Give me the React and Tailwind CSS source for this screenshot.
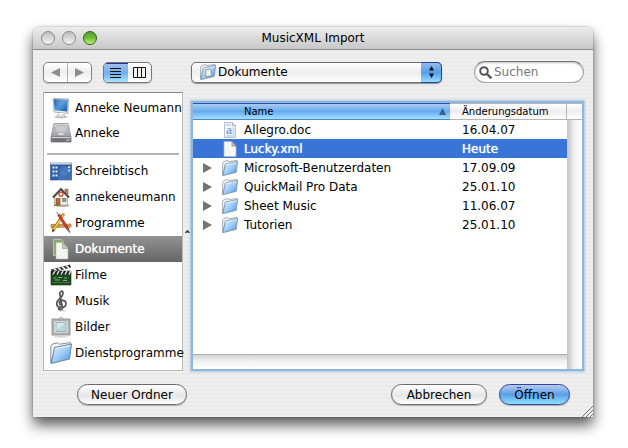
import React, { useState } from "react";

function ComputerIcon() {
  return (
    <svg viewBox="0 0 22 22" className="w-[22px] h-[22px]" aria-hidden="true">
      <defs>
        <linearGradient id="screen" x1="0" y1="0" x2="1" y2="1">
          <stop offset="0" stopColor="#1d559f" />
          <stop offset=".5" stopColor="#4f9ade" />
          <stop offset="1" stopColor="#1f569e" />
        </linearGradient>
      </defs>
      <ellipse cx="11" cy="20" rx="7" ry="1.5" fill="#c9c9c9" />
      <path d="M9 15h4l2 5H7z" fill="#e5e5e5" stroke="#a5a5a5" strokeWidth=".6" />
      <path d="M3 1.500l15.500.500-.7 14.500L4 15z" fill="#e9edf2" stroke="#9aa3b0" strokeWidth=".8" />
      <path d="M3.800 2.300l14 .5-.6 11.700L4.600 13.200z" fill="url(#screen)" />
      <path d="M4 2.500l13.500.400L8 9z" fill="#fff" opacity=".12" />
      <path d="M7.500 16l3.500 3.500L14.500 16" fill="#f8f8f8" stroke="#bbb" strokeWidth=".5" />
    </svg>
  );
}

function DiskIcon() {
  return (
    <svg viewBox="0 0 22 22" className="w-[22px] h-[22px]" aria-hidden="true">
      <defs>
        <linearGradient id="disk" x1="0" y1="0" x2="0" y2="1">
          <stop offset="0" stopColor="#d9d9dc" />
          <stop offset="1" stopColor="#9b9ba1" />
        </linearGradient>
      </defs>
      <path d="M4 1.500h14L21 15H1z" fill="url(#disk)" stroke="#85858b" strokeWidth=".7" />
      <path d="M1 15h20v5H1z" fill="#7e7e84" stroke="#67676d" strokeWidth=".7" />
      <path d="M1.500 15.500h19" stroke="#d5d5d8" />
      <ellipse cx="11" cy="7" rx="6" ry="4.2" fill="#cacace" stroke="#a4a4aa" strokeWidth=".6" />
      <path d="M6 12h10l-1-2H8z" fill="#b0b0b6" />
      <ellipse cx="11" cy="11.8" rx="3.2" ry="1.5" fill="#e7e7ea" stroke="#8f8f95" strokeWidth=".5" />
      <path d="M4 17v2.500M6 17v2.500M8 17v2.500M10 17v2.500M12 17v2.500M14 17v2.500" stroke="#5c5c61" strokeWidth=".8" />
      <circle cx="18" cy="18" r=".8" fill="#e8e8e8" />
    </svg>
  );
}

function DesktopIcon() {
  return (
    <svg viewBox="0 0 22 22" className="w-[22px] h-[22px]" aria-hidden="true">
      <rect x=".5" y="3" width="21" height="17" fill="#2f5fa5" stroke="#274d88" strokeWidth=".6" />
      <rect x=".5" y="2.500" width="21" height="2" fill="#cfd7e5" />
      <path d="M8 20c0-7 4-11 13.500-15v15z" fill="#4679bc" opacity=".7" />
      <circle cx="14" cy="11" r="5" fill="#5688c6" opacity=".5" />
      <path d="M2.500 6.500h2v2h-2zM5.500 6.500h2v2h-2zM2.500 10.500h2v2h-2zM5.500 10.500h2v2h-2zM2.500 14.500h2v2h-2zM5.500 14.500h2v2h-2zM18 6.500h2v1.500h-2zM18.500 9.500h1.500v2h-1.500z" fill="#e6edf7" />
    </svg>
  );
}

function HomeIcon() {
  return (
    <svg viewBox="0 0 22 22" className="w-[22px] h-[22px]" aria-hidden="true">
      <ellipse cx="12" cy="19.500" rx="8" ry="1.500" fill="#b8b0a5" />
      <path d="M15 3h3v5h-3z" fill="#a98d77" stroke="#6c5343" strokeWidth=".5" />
      <path d="M4.500 10L11 4l6.500 6v9h-13z" fill="#f1efe9" stroke="#9b958b" strokeWidth=".7" />
      <path d="M3 11.500L11 3l8 8.500" fill="none" stroke="#4a423c" strokeWidth="2" />
      <path d="M3.500 10L11 2l7.500 8" fill="none" stroke="#988b80" strokeWidth=".6" />
      <circle cx="11" cy="8.200" r="2" fill="#f1efe9" stroke="#c0502c" strokeWidth="1.200" />
      <rect x="6" y="12.500" width="4" height="6.500" fill="#b96930" stroke="#704020" strokeWidth=".5" />
      <rect x="12.500" y="12.500" width="3.500" height="3" fill="#89919a" stroke="#666" strokeWidth=".5" />
      <path d="M4 19.500h5" stroke="#648842" />
    </svg>
  );
}

function AppsIcon() {
  return (
    <svg viewBox="0 0 22 22" className="w-[22px] h-[22px]" aria-hidden="true">
      <path d="M1 12.500l20-.500v3l-20 .500z" fill="#d99b55" stroke="#93602b" strokeWidth=".6" />
      <path d="M13.500 2L3 18.500" stroke="#8b6b13" strokeWidth="3" />
      <path d="M13.500 2.500L3.300 18.300" stroke="#f3cb3b" strokeWidth="1.800" />
      <path d="M2 20.500l.5-3.500 2.500 1.500z" fill="#4b3a2a" />
      <path d="M8.500 2.500L18.500 18" stroke="#831d1b" strokeWidth="2.600" />
      <path d="M8.500 2.500L18.300 17.700" stroke="#dd4038" strokeWidth="1.500" />
      <path d="M17.500 17l2.500 3.500" stroke="#7b7b7b" strokeWidth="1.700" />
      <path d="M13.500 1l1.500 1.200-1 1.500-1.700-1z" fill="#e57a8c" />
      <path d="M7 0l1 2.500" stroke="#777" />
    </svg>
  );
}

function DocumentsIcon() {
  return (
    <svg viewBox="0 0 22 22" className="w-[22px] h-[22px]" aria-hidden="true">
      <path d="M3.500 1.500h8l2 3v13h-10z" fill="#86a668" stroke="#cfdcc2" strokeWidth=".7" />
      <path d="M6 4.500h7l5 5.500v11H6z" fill="#f3f5ef" stroke="#b2b9aa" strokeWidth=".6" />
      <path d="M12.500 4.500v6H18z" fill="#c2cbba" stroke="#8c9683" strokeWidth=".6" />
    </svg>
  );
}

function MoviesIcon() {
  return (
    <svg viewBox="0 0 22 22" className="w-[22px] h-[22px]" aria-hidden="true">
      <path d="M1 5.500L20 .500l1 3L2 8.500z" fill="#333" />
      <path d="M4 4.700l3 2.400M8 3.700l3 2.400M12 2.600l3 2.400M16 1.500l3 2.400" stroke="#f4f4f4" strokeWidth="1.600" />
      <path d="M1 7h20v14H1z" fill="#1e4a20" stroke="#17321a" strokeWidth=".6" />
      <path d="M1 7h20v3.500H1z" fill="#222" />
      <path d="M3 10.500l2-3.500M7 10.500L9 7M11 10.500L13 7M15 10.500L17 7M19 10.500L20.500 7" stroke="#eee" strokeWidth="1.400" />
      <path d="M3.500 14h3M8 13.500h4M14 14h3M5 16h5M13 16.500h4" stroke="#9fc79a" strokeWidth=".8" />
      <path d="M2 18.500h18" stroke="#4f8a4c" strokeWidth=".6" />
    </svg>
  );
}

function MusicIcon() {
  return (
    <svg viewBox="0 0 22 22" className="w-[22px] h-[22px]" aria-hidden="true">
      <ellipse cx="12" cy="20.800" rx="4.500" ry=".8" fill="#d2d2d2" />
      <path
        d="M12.600 18.500L9.800 4C9.600 2 11.500.800 12.300 1.200c1 .6.900 3.300-.6 5.200-1.500 1.900-5 3.700-5 7.200 0 2.300 2 3.800 4.600 3.800s4.600-1.500 4.600-3.700c0-2-1.600-3.300-3.400-3.300-1.900 0-3 1.200-3 2.600 0 1.100.8 1.900 1.800 2.100"
        fill="none"
        stroke="#555"
        strokeWidth="1.700"
      />
      <path d="M12.600 18c.1 1.500-2.500 2.400-3.800 1" fill="none" stroke="#555" strokeWidth="1.400" />
      <circle cx="9.200" cy="18.400" r="1.500" fill="#555" />
    </svg>
  );
}

function PicturesIcon() {
  return (
    <svg viewBox="0 0 22 22" className="w-[22px] h-[22px]" aria-hidden="true">
      <ellipse cx="11" cy="20.700" rx="8" ry=".8" fill="#d5d5d5" />
      <path d="M8 3.500L11 1l3 2.500" fill="none" stroke="#999" strokeWidth=".8" />
      <rect x="2" y="3" width="18" height="16" fill="#b9bbbc" stroke="#808384" strokeWidth=".8" />
      <rect x="4" y="5" width="14" height="12" fill="#f4f4f4" stroke="#999" strokeWidth=".7" />
      <rect x="6" y="6.700" width="10" height="8.800" fill="#b4d8dc" stroke="#8aa3a6" strokeWidth=".8" />
      <path d="M6.500 7h9L6.500 14z" fill="#e2f2f3" opacity=".7" />
    </svg>
  );
}

function FolderIcon({ className = "w-[22px] h-[22px]", open = false }) {
  return (
    <svg viewBox="0 0 22 22" className={className} aria-hidden="true">
      <defs>
        <linearGradient id="folder" x1="0" y1="0" x2="1" y2="1">
          <stop offset="0" stopColor="#e6f4ff" />
          <stop offset=".5" stopColor="#a0cdf8" />
          <stop offset="1" stopColor="#3f8ce4" />
        </linearGradient>
      </defs>
      <path d="M.800 21V4.500L3 1.800l5-1L9.500 2.200 20.500.600V4L5 7z" fill="#f1f4f6" stroke="#8494a2" strokeWidth="1" />
      <path d="M4.500 5.500L21.500 2 19.500 17 1.300 21.500z" fill="url(#folder)" stroke="#6f8499" strokeWidth="1" />
      <path d="M5.300 6.700L20.300 3.600" stroke="#f2faff" strokeWidth="1" />
      {open && <path d="M8 17.500V8l5-1.200 2.500 2v7.500z" fill="#edf4e9" stroke="#75896f" strokeWidth="1" />}
    </svg>
  );
}

function DocFileIcon() {
  return (
    <svg viewBox="0 0 16 16" className="w-4 h-4" aria-hidden="true">
      <path d="M2.500.500h8l3 3v12h-11z" fill="#f0f4fb" stroke="#a9b2c2" strokeWidth=".8" />
      <path d="M10.500.500v3h3" fill="#d5dce8" stroke="#929daf" strokeWidth=".7" />
      <path d="M4 3h5M4 14h8M10.500 6h2M10.500 8h2M10.500 10h2M10.500 12h2" stroke="#9ab3dc" strokeWidth=".8" />
      <text x="4" y="12" fontSize="12" fontWeight="700" fill="#7fa3de" fontFamily="Liberation Serif, serif">
        a
      </text>
    </svg>
  );
}

function BlankFileIcon() {
  return (
    <svg viewBox="0 0 16 16" className="w-4 h-4" aria-hidden="true">
      <path d="M2 .500h8l4 4.500v10.500H2z" fill="#f7f7f7" stroke="#b8b8b8" strokeWidth=".7" />
      <path d="M10 .500V5h4z" fill="#d0d0d0" stroke="#777" strokeWidth=".7" />
    </svg>
  );
}

const devices = [
  { name: "Anneke Neumann", icon: ComputerIcon },
  { name: "Anneke", icon: DiskIcon },
];

const places = [
  { name: "Schreibtisch", icon: DesktopIcon },
  { name: "annekeneumann", icon: HomeIcon },
  { name: "Programme", icon: AppsIcon },
  { name: "Dokumente", icon: DocumentsIcon },
  { name: "Filme", icon: MoviesIcon },
  { name: "Musik", icon: MusicIcon },
  { name: "Bilder", icon: PicturesIcon },
  { name: "Dienstprogramme", icon: FolderIcon },
];

const files = [
  { name: "Allegro.doc", date: "16.04.07", type: "doc" },
  { name: "Lucky.xml", date: "Heute", type: "xml" },
  { name: "Microsoft-Benutzerdaten", date: "17.09.09", type: "folder" },
  { name: "QuickMail Pro Data", date: "25.01.10", type: "folder" },
  { name: "Sheet Music", date: "11.06.07", type: "folder" },
  { name: "Tutorien", date: "25.01.10", type: "folder" },
];

function SidebarItem({ item, active, onSelect, className }) {
  const Icon = item.icon;
  return (
    <li>
      <button
        onClick={() => onSelect(item.name)}
        className={`flex w-full items-center gap-[3px] pl-1.5 text-left whitespace-nowrap ${className} ${
          active ? "bg-linear-to-b from-[#939393] to-[#666666] text-white [text-shadow:0_0_1px_white]" : ""
        }`}
      >
        <span className="shrink-0">
          <Icon />
        </span>
        {item.name}
      </button>
    </li>
  );
}

function PushButton({ children, primary = false, className }) {
  return (
    <button
      className={`h-[21px] rounded-full border leading-[18px] shadow-[0_1px_1px_rgba(0,0,0,0.25)] ${className} ${
        primary
          ? "border-[#34439c] bg-linear-to-b from-[#b9c9ee] via-[#5b9fe9] via-50% to-[#8fe0ff]"
          : "border-[#6b6b6b] bg-linear-to-b from-white via-[#e6e6e6] via-55% to-white"
      }`}
    >
      {children}
    </button>
  );
}

export default function App() {
  const [place, setPlace] = useState("Dokumente");
  const [selected, setSelected] = useState("Lucky.xml");

  return (
    <div className="bg-white pt-[27px] pr-[35px] pb-[31px] pl-[33px] font-['DejaVu_Sans',sans-serif] text-[12px] leading-[18px] text-black">
      <main className="rounded-t-[6px] bg-[repeating-linear-gradient(to_bottom,#efefef_0px,#efefef_2px,#eaeaea_2px,#eaeaea_4px)] shadow-[0_0_2px_rgba(0,0,0,0.4),0_8px_14px_rgba(0,0,0,0.65)]">
        <header className="flex h-[23px] items-center rounded-t-[6px] border-b border-[#8e8e8e] bg-linear-to-b from-[#ececec] to-[#c8c8c8] px-2">
          <div className="flex w-[57px] gap-[7px]">
            <button aria-label="Schließen" className="size-3.5 rounded-full border border-[#8c8c8c] bg-linear-to-b from-[#bcbcbc] to-[#f4f4f4]" />
            <button aria-label="Minimieren" className="size-3.5 rounded-full border border-[#8c8c8c] bg-linear-to-b from-[#bcbcbc] to-[#f4f4f4]" />
            <button aria-label="Zoomen" className="size-3.5 rounded-full border border-[#2e5c17] bg-linear-to-b from-[#5b9c36] via-[#6dbb31] to-[#c5f87c]" />
          </div>
          <h1 className="flex-1 text-center">MusicXML Import</h1>
          <div className="w-[57px]" />
        </header>

        <div className="flex items-center pt-[11px] pr-[9px] pl-2.5">
          <div className="flex h-[21px] w-[49px] rounded-[5px] border border-[#858585] bg-linear-to-b from-white via-[#eeeeee] to-white shadow-[0_1px_1px_rgba(0,0,0,0.2)]">
            <button aria-label="Zurück" className="flex flex-1 items-center justify-center border-r border-[#b0b0b0]">
              <svg viewBox="0 0 9 9" className="size-[9px]" fill="#8d8d8d"><path d="M9 0v9L0 4.500z" /></svg>
            </button>
            <button aria-label="Vorwärts" className="flex flex-1 items-center justify-center">
              <svg viewBox="0 0 9 9" className="size-[9px]" fill="#8d8d8d"><path d="M0 0v9l9-4.500z" /></svg>
            </button>
          </div>
          <div className="ml-[11px] flex h-[21px] w-[49px] overflow-hidden rounded-[5px] border border-[#777777] bg-linear-to-b from-white via-[#eeeeee] to-white shadow-[0_1px_1px_rgba(0,0,0,0.2)]">
            <button aria-label="Liste" className="flex flex-1 items-center justify-center border-t border-[#26349a] bg-linear-to-b from-[#9ebfee] via-[#6fb0f0] to-[#a8e5ff]">
              <svg viewBox="0 0 11 10" className="h-2.5 w-[11px]" stroke="#111"><path d="M0 .5h11M0 3.500h11M0 6.500h11M0 9.500h11" /></svg>
            </button>
            <button aria-label="Spalten" className="flex flex-1 items-center justify-center">
              <svg viewBox="0 0 13 11" className="h-[11px] w-[13px]" stroke="#111" fill="none"><path d="M.5.500h12v10H.5zM4.500.500v10M8.500.500v10" /></svg>
            </button>
          </div>

          <div className="relative ml-[39px] flex-1">
            <select
              aria-label="Ordner"
              className="block h-[21px] w-full appearance-none rounded-[5px] border border-[#737373] bg-linear-to-b from-white via-[#eeeeee] to-white pl-[26px] leading-[18px] shadow-[0_1px_1px_rgba(0,0,0,0.4)]"
            >
              <option>Dokumente</option>
            </select>
            <span className="pointer-events-none absolute top-[2px] left-[9px]">
              <FolderIcon open className="size-4" />
            </span>
            <span className="pointer-events-none absolute top-0 right-0 flex h-[21px] w-[21px] items-center justify-center rounded-r-[5px] border border-l-0 border-[#26439c] bg-linear-to-b from-[#94b9ec] via-[#559eea] to-[#93dfff]">
              <svg viewBox="0 0 5 12" className="h-3 w-[5px]" fill="#111"><path d="M2.500 0L5 4.500H0zM0 7.500h5L2.500 12z" /></svg>
            </span>
          </div>

          <label className="ml-8 flex h-[22px] w-[110px] items-center gap-0.5 rounded-full border border-[#a5a5a5] border-t-[#777777] bg-white pl-1 shadow-[inset_0_1px_2px_rgba(0,0,0,0.25)]">
            <svg viewBox="0 0 13 13" className="size-[13px] shrink-0" fill="none" stroke="#555" strokeWidth="2">
              <circle cx="5" cy="5" r="3.800" />
              <path d="M8 8l4.300 4.300" strokeWidth="2.400" />
            </svg>
            <input aria-label="Suchen" placeholder="Suchen" className="w-full min-w-0 bg-transparent placeholder:text-[#777777] outline-none" />
          </label>
        </div>

        <div className="flex pt-[9px] pr-[9px] pl-2.5">
          <nav className="w-[140px] shrink-0 border border-[#b9b9b9] border-t-[#858585] bg-white pt-0.5 pb-1">
            <ul>
              {devices.map((d) => (
                <SidebarItem key={d.name} item={d} active={place === d.name} onSelect={setPlace} className="h-[25px]" />
              ))}
            </ul>
            <hr className="mx-[3px] mt-2 mb-[3px] border-t-2 border-[#b3b3b3]" />
            <ul>
              {places.map((p) => (
                <SidebarItem key={p.name} item={p} active={place === p.name} onSelect={setPlace} className="h-[26px]" />
              ))}
            </ul>
          </nav>

          <div className="flex w-2 shrink-0 items-center justify-center">
            <svg viewBox="0 0 5 3" className="h-[3px] w-[5px]" fill="none" stroke="#333" strokeWidth="1.500"><path d="M.5 3l2-2 2 2" /></svg>
          </div>

          <section className="mt-[9px] flex flex-1 border-2 border-[#8db7dc] bg-white shadow-[0_0_2px_1px_rgba(141,183,220,0.7)]">
            <div className="flex flex-1 flex-col">
              <table className="w-full table-fixed border-separate border-spacing-0">
                <thead>
                  <tr className="h-[17px] text-left text-[10px] leading-[14px]">
                    <th aria-sort="ascending" className="border-t border-b border-t-[#2454b0] border-b-[#4d86c4] bg-linear-to-b from-[#a9cbf2] via-[#65abf0] via-50% to-[#a2e2ff] p-0 font-normal">
                      <div className="flex items-center justify-between pr-1 pl-[51px]">
                        Name
                        <svg viewBox="0 0 7 7" className="size-[7px]" fill="#3c5f86"><path d="M3.500 0L7 7H0z" /></svg>
                      </div>
                    </th>
                    <th className="w-[117px] border-t border-r border-b border-[#b5b5b5] bg-linear-to-b from-white via-[#eeeeee] to-white p-0 pl-3 font-normal">Änderungsdatum</th>
                  </tr>
                </thead>
                <tbody>
                  {files.map((f) => {
                    const active = selected === f.name;
                    return (
                      <tr
                        key={f.name}
                        onClick={() => setSelected(f.name)}
                        className={`h-[19px] ${active ? "bg-[#3875d7] text-white [text-shadow:0_0_1px_white]" : ""}`}
                      >
                        <td className="p-0">
                          <div className="flex h-[19px] items-center pl-2.5 whitespace-nowrap">
                            <span className="flex w-[19px] items-center">
                              {f.type === "folder" && (
                                <button aria-label={`${f.name} öffnen`}>
                                  <svg viewBox="0 0 9 10" className="h-2.5 w-[9px]" fill="#737373"><path d="M0 0l9 5-9 5z" /></svg>
                                </button>
                              )}
                            </span>
                            <span className="mr-1.5">
                              {f.type === "doc" && <DocFileIcon />}
                              {f.type === "xml" && <BlankFileIcon />}
                              {f.type === "folder" && <FolderIcon className="size-4" />}
                            </span>
                            {f.name}
                          </div>
                        </td>
                        <td className="p-0 pl-3">{f.date}</td>
                      </tr>
                    );
                  })}
                </tbody>
              </table>
              <div className="mt-auto h-[15px] border-t border-[#b0b0b0] bg-linear-to-b from-[#d2d2d2] via-[#f4f4f4] to-white" />
            </div>
            <div className="flex w-[15px] flex-col">
              <div className="h-[17px] border-t border-b border-[#b5b5b5] bg-linear-to-b from-white via-[#eeeeee] to-white" />
              <div className="flex-1 bg-linear-to-r from-[#c2c2c2] via-[#f2f2f2] to-white" />
            </div>
          </section>
        </div>

        <footer className="relative flex items-center pt-[13px] pr-[23px] pb-3 pl-11">
          <PushButton className="w-[110px]">Neuer Ordner</PushButton>
          <PushButton className="ml-auto w-24">Abbrechen</PushButton>
          <PushButton primary className="ml-3 w-[71px]">Öffnen</PushButton>
          <svg viewBox="0 0 12 12" className="absolute right-0 bottom-0 size-3" stroke="#777"><path d="M1 12L12 1M5 12l7-7M9 12l3-3" /></svg>
        </footer>
      </main>
    </div>
  );
}
